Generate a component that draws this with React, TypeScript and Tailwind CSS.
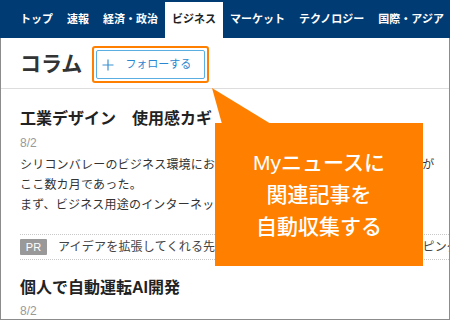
const font = "font-['Liberation_Sans','Noto_Sans_CJK_JP',sans-serif]";

const tabs = ["トップ", "速報", "経済・政治", "ビジネス", "マーケット", "テクノロジー", "国際・アジア"];

function PlusIcon() {
  return (
    <svg width="12" height="12" viewBox="0 0 12 12" className="shrink-0">
      <path d="M6 0.5V11.5M0.5 6H11.5" stroke="#3d92d2" strokeWidth="1.2" fill="none" />
    </svg>
  );
}

export default function App() {
  return (
    <div className={`relative w-[450px] h-[320px] overflow-hidden bg-white flex flex-col ${font}`}>
      {/* Top nav */}
      <nav className="h-[38px] shrink-0 bg-[#003b73] flex items-stretch pl-[13px]">
        {tabs.map((t) => {
          const active = t === "ビジネス";
          return (
            <div
              key={t}
              className={`px-[7px] flex items-center text-[11px] font-bold leading-none whitespace-nowrap ${
                active ? "bg-white text-[#222] mt-[2px]" : "text-white"
              }`}
            >
              {active ? <span className="-mt-[2px]">{t}</span> : t}
            </div>
          );
        })}
      </nav>

      <div className="flex-1 flex flex-col border-x border-b border-[#8c8c8c] min-h-0">
        {/* Header */}
        <div className="h-[51px] shrink-0 border-b border-[#dddddd] flex items-center pl-[19px] gap-[10px]">
          <h1 className="text-[21px] font-bold text-[#333] leading-none">コラム</h1>
          <div className="border-2 border-[#ff8000] rounded-[3px] p-[2px] mt-[3px]">
            <button className="w-[109px] h-[29px] border border-[#5aaee0] rounded-[2px] flex items-center pl-[5px] gap-[11px] bg-white">
              <PlusIcon />
              <span className="text-[11px] text-[#2b87cf] leading-none">フォローする</span>
            </button>
          </div>
        </div>

        {/* Articles */}
        <div className="pl-[19px] flex flex-col min-h-0">
          <h2 className="mt-[18px] text-[16px] font-bold text-[#222] leading-[24px] whitespace-nowrap">
            工業デザイン　使用感カギ
          </h2>
          <div className="mt-[4px] text-[12px] text-[#999] leading-[16px]">8/2</div>
          <div className="mt-[4px] text-[12px] text-[#333] leading-[20px] tracking-[0.2px]">
            <p className="whitespace-nowrap">シリコンバレーのビジネス環境において大きな変化が起きたと感じることが</p>
            <p className="whitespace-nowrap">ここ数カ月であった。</p>
            <p className="whitespace-nowrap overflow-hidden">まず、ビジネス用途のインターネットサービスが急増している。</p>
          </div>

          <div className="mt-[19px] h-[29px] border-y border-dotted border-[#c8c8c8] flex items-center gap-[11px] overflow-hidden whitespace-nowrap">
            <span className="w-[27px] h-[16px] bg-[#999] text-white text-[11px] leading-none flex items-center justify-center rounded-[1px] shrink-0">
              PR
            </span>
            <span className="text-[12px] text-[#444] leading-none tracking-[0.2px]">
              アイデアを拡張してくれる先進的なデジタルツールで快適にショッピング
            </span>
          </div>

          <h2 className="mt-[16px] text-[16px] font-bold text-[#222] leading-[24px] whitespace-nowrap">
            個人で自動運転AI開発
          </h2>
          <div className="mt-[3px] text-[12px] text-[#999] leading-[16px]">8/2</div>
        </div>
      </div>

      {/* Callout annotation */}
      <svg className="absolute left-0 top-0 pointer-events-none" width="450" height="320">
        <polygon points="212,88 222,124 271,124" fill="#ff8000" />
      </svg>
      <div className="absolute left-[215px] top-[123px] w-[208px] h-[143px] bg-[#ff8000] flex flex-col items-center justify-center text-white text-[21px] font-medium leading-[32px]">
        <span>Myニュースに</span>
        <span>関連記事を</span>
        <span>自動収集する</span>
      </div>
    </div>
  );
}
